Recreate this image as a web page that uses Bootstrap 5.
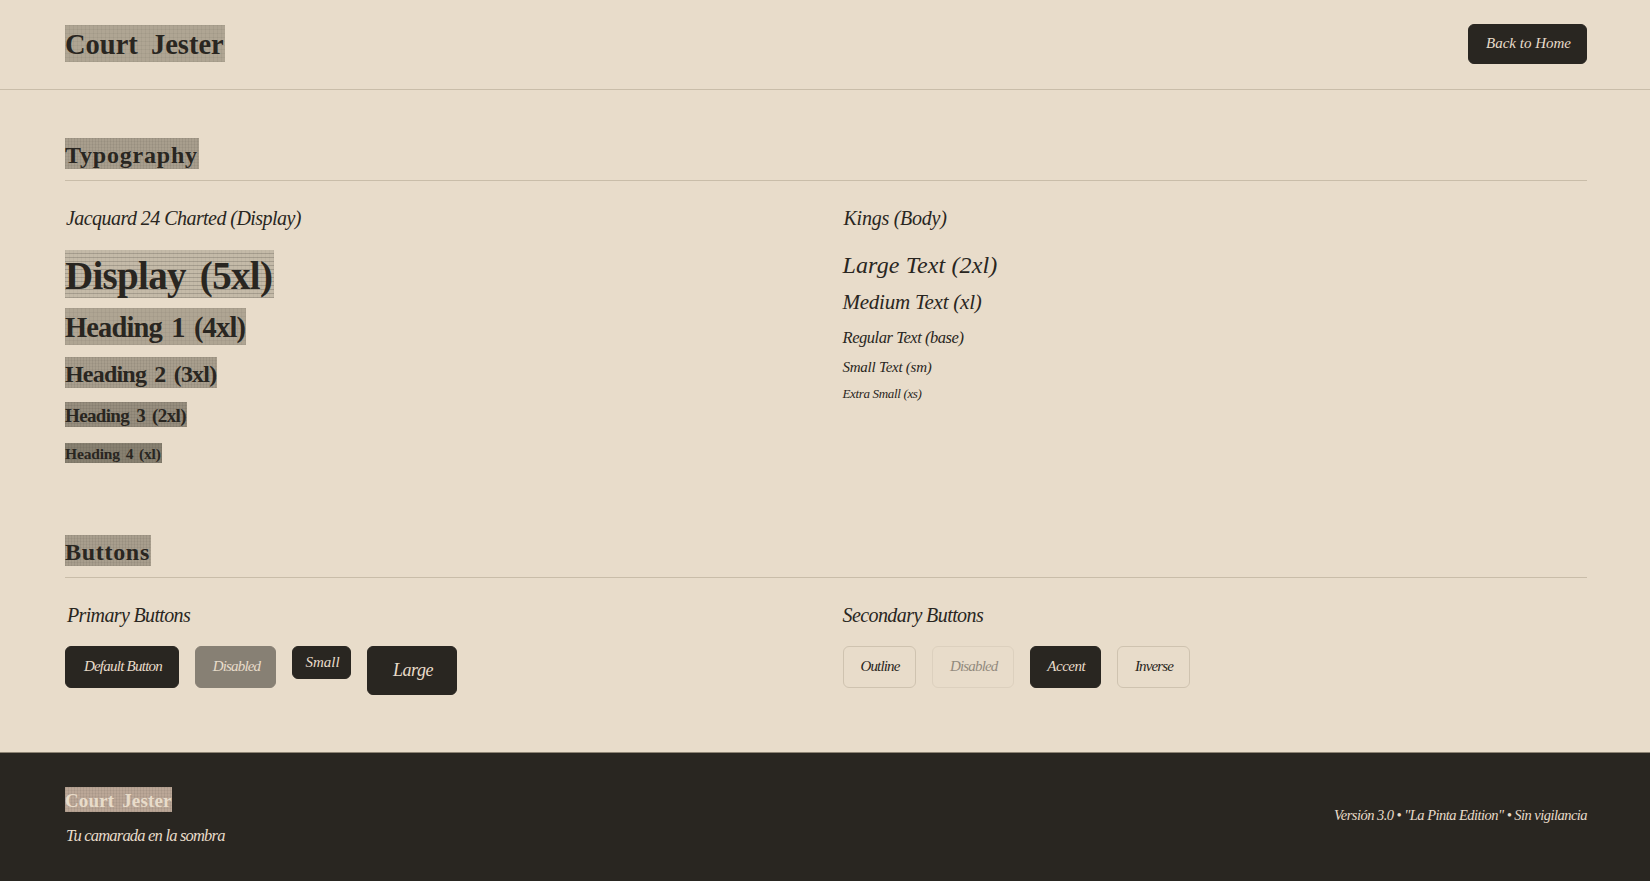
<!DOCTYPE html>
<html lang="es">
<head>
<meta charset="utf-8">
<meta name="viewport" content="width=device-width, initial-scale=1">
<title>Court Jester</title>
<link href="https://cdn.jsdelivr.net/npm/bootstrap@5.3.0/dist/css/bootstrap.min.css" rel="stylesheet">
<style>
:root{--paper:#e8dcca;--ink:#292621;--rule:#c9bda9}
body{background:var(--paper);color:var(--ink);font-family:"Liberation Serif",serif;font-style:italic;height:881px;overflow:hidden}
.shell{padding-left:65px;padding-right:63px}
.topbar{height:90px;padding-top:24px;border-bottom:1px solid var(--rule)}
.sheet{height:662px;padding-top:48px}
.foot{height:129px;padding-top:34px;background:var(--ink);color:var(--paper);border-top:1px solid #8d8474}
/* headings woven on a charted cloth */
.charted{display:block;width:var(--w);font:normal bold var(--fs)/calc(var(--h) - var(--pt,3px)) "Liberation Serif",serif;height:var(--h);padding-top:var(--pt,3px);white-space:nowrap;margin:0;letter-spacing:var(--ls,0);word-spacing:var(--ws,3px);background-color:var(--cloth);
background-image:repeating-linear-gradient(90deg,rgba(41,38,33,var(--va,.08)) 0 1px,transparent 1px var(--p)),repeating-linear-gradient(0deg,rgba(41,38,33,var(--ha,.05)) 0 1px,transparent 1px var(--p))}
.c5{--h:48px;--fs:39px;--p:4px;--va:.04;--ha:.2;--ws:5px;--cloth:#c4baa8}
.c4{--h:37px;--fs:28.5px;--p:4px;--va:.05;--cloth:#afa593}
.c3{--h:31px;--fs:24px;--p:3px;--cloth:#a89e8d}
.c2{--h:25px;--fs:19px;--p:3px;--ha:.08;--pt:2px;--cloth:#978e7e}
.c1{--h:20px;--fs:15.5px;--p:3px;--ws:2px;--pt:1px;--cloth:#878070}
.c-foot{--cloth:#bba797;--va:.07;--ha:.05}
.head{height:43px;border-bottom:1px solid var(--rule)}
.cols{--bs-gutter-x:33px}
.line{white-space:nowrap;margin:0;letter-spacing:var(--ls,0)}
.sub{font-size:20px;line-height:28px;margin-top:22px;padding-top:1px;height:28px;font-weight:400}
.t2{font-size:24px;line-height:24px;margin-top:22px;--ls:.13px}
.t1{font-size:21px;line-height:21px;margin-top:15px;--ls:-.23px}
.t0{font-size:16.5px;line-height:17px;margin-top:16px;--ls:-.45px}
.ts{font-size:15px;line-height:15px;margin-top:14px;--ls:-.25px}
.tx{font-size:13px;line-height:13px;margin-top:12px;--ls:-.34px}
.btn{--bs-btn-border-radius:6px;--bs-btn-font-size:15px;--bs-btn-line-height:20px;--bs-btn-font-family:"Liberation Serif",serif;--bs-btn-padding-x:0;--bs-btn-padding-y:0;display:flex;align-items:center;justify-content:center;height:var(--bh,42px);width:var(--w);white-space:nowrap;letter-spacing:var(--ls,0);padding:0 0 2px 2px;font-style:italic}
.btn-ink{--bs-btn-bg:var(--ink);--bs-btn-color:var(--paper);--bs-btn-border-color:var(--ink);--bs-btn-hover-bg:var(--ink);--bs-btn-hover-color:var(--paper);--bs-btn-disabled-bg:var(--ink);--bs-btn-disabled-color:var(--paper);--bs-btn-disabled-border-color:var(--ink);--bs-btn-disabled-opacity:.5}
.btn-line{--bs-btn-color:var(--ink);--bs-btn-border-color:#cfc3b0;--bs-btn-disabled-color:var(--ink);--bs-btn-disabled-border-color:#cfc3b0;--bs-btn-disabled-opacity:.45}
.set{gap:16px;margin-top:18px}
</style>
</head>
<body>
<header class="topbar shell d-flex justify-content-between align-items-start">
  <h1 class="charted c4" style="--w:160px;--ws:6px;margin-top:1px">Court Jester</h1>
  <a class="btn btn-ink" href="#" style="--w:119px;--bh:40px">Back to Home</a>
</header>
<main class="sheet shell">
  <section>
    <div class="head"><h2 class="charted c3" style="--w:134px;--ls:.8px">Typography</h2></div>
    <div class="row cols">
      <div class="col-6">
        <h3 class="line sub" style="--ls:-.55px;padding-left:1px">Jacquard 24 Charted (Display)</h3>
        <p class="charted c5" style="--w:209px;--ls:-.7px;margin-top:19px">Display (5xl)</p>
        <p class="charted c4" style="--w:181px;--ls:-.85px;margin-top:10px">Heading 1 (4xl)</p>
        <p class="charted c3" style="--w:152px;--ls:-.8px;margin-top:12px">Heading 2 (3xl)</p>
        <p class="charted c2" style="--w:122px;--ls:-.65px;margin-top:14px">Heading 3 (2xl)</p>
        <p class="charted c1" style="--w:97px;--ls:-.15px;margin-top:16px">Heading 4 (xl)</p>
      </div>
      <div class="col-6">
        <h3 class="line sub" style="--ls:-.25px;padding-left:1px">Kings (Body)</h3>
        <p class="line t2">Large Text (2xl)</p>
        <p class="line t1">Medium Text (xl)</p>
        <p class="line t0">Regular Text (base)</p>
        <p class="line ts">Small Text (sm)</p>
        <p class="line tx">Extra Small (xs)</p>
      </div>
    </div>
  </section>
  <section style="margin-top:72px">
    <div class="head"><h2 class="charted c3" style="--w:86px;--ls:.7px">Buttons</h2></div>
    <div class="row cols">
      <div class="col-6">
        <h3 class="line sub" style="--ls:-.65px;padding-left:2px">Primary Buttons</h3>
        <div class="d-flex align-items-start set">
          <button class="btn btn-ink" style="--w:114px;--ls:-.75px">Default Button</button>
          <button class="btn btn-ink" style="--w:81px;--ls:-.85px" disabled>Disabled</button>
          <button class="btn btn-ink" style="--w:59px;--bh:33px">Small</button>
          <button class="btn btn-ink" style="--w:90px;--bh:49px;--bs-btn-font-size:18px;--ls:-.5px">Large</button>
        </div>
      </div>
      <div class="col-6">
        <h3 class="line sub" style="--ls:-.58px">Secondary Buttons</h3>
        <div class="d-flex align-items-start set">
          <button class="btn btn-line" style="--w:73px;--ls:-.85px">Outline</button>
          <button class="btn btn-line" style="--w:82.5px;--ls:-.85px" disabled>Disabled</button>
          <button class="btn btn-ink" style="--w:70.5px;--ls:-.5px">Accent</button>
          <button class="btn btn-line" style="--w:73px;--ls:-.85px">Inverse</button>
        </div>
      </div>
    </div>
  </section>
</main>
<footer class="foot shell d-flex justify-content-between align-items-start">
  <div>
    <p class="charted c2 c-foot" style="--w:107px;--ls:.15px">Court Jester</p>
    <p class="line" style="font-size:16.5px;line-height:24px;margin-top:12px;padding-left:1px;--ls:-.8px">Tu camarada en la sombra</p>
  </div>
  <p class="line" style="font-size:14.5px;line-height:20px;margin-top:18px;--ls:-.53px">Versión 3.0 • "La Pinta Edition" • Sin vigilancia</p>
</footer>
<script src="https://cdn.jsdelivr.net/npm/bootstrap@5.3.0/dist/js/bootstrap.bundle.min.js"></script>
</body>
</html>
